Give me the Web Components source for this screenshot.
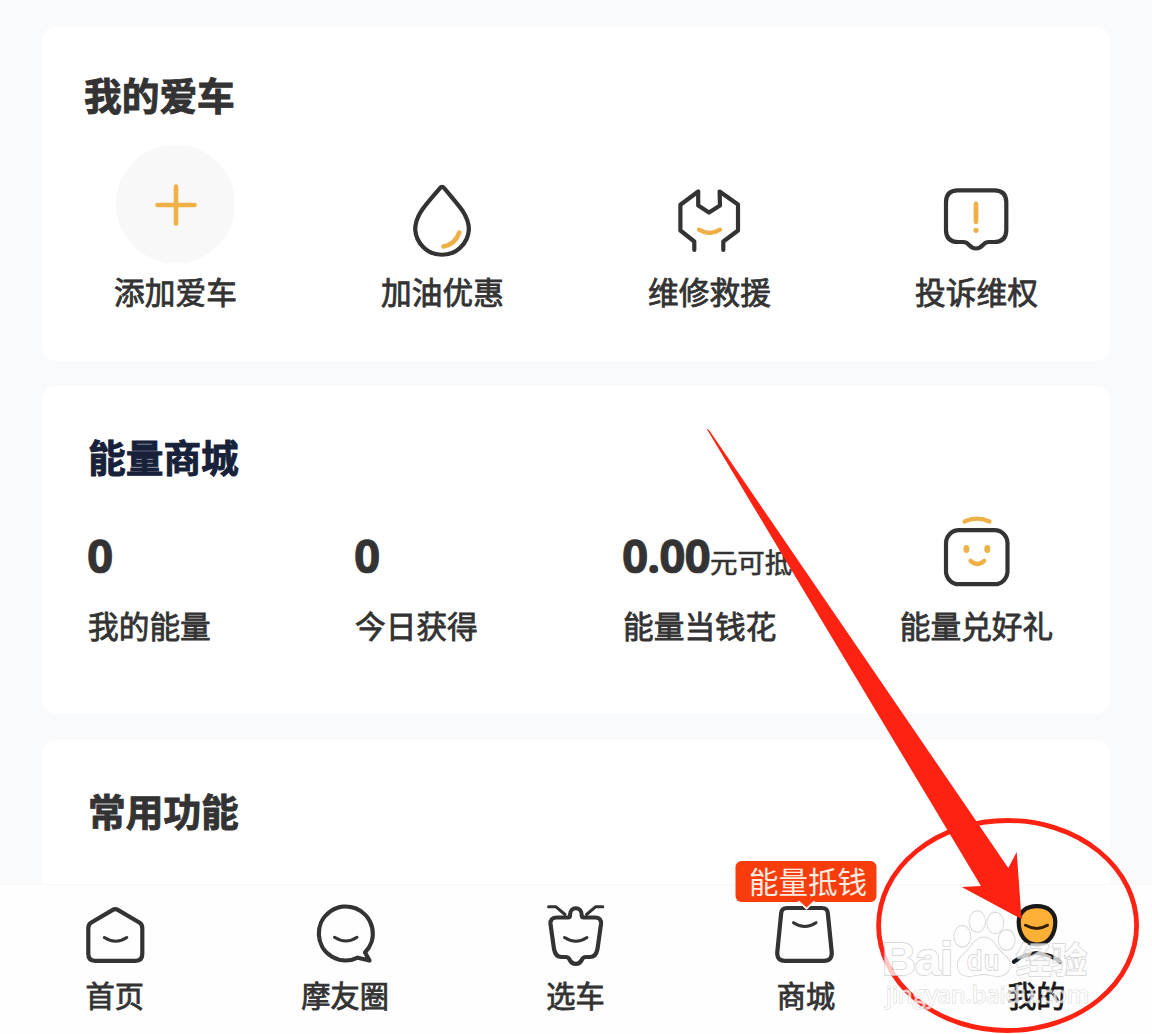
<!DOCTYPE html>
<html lang="zh-CN">
<head>
<meta charset="utf-8">
<title>我的</title>
<style>
html,body{margin:0;padding:0}
body{width:1152px;height:1034px;overflow:hidden;background:#f8fafc;font-family:"Noto Sans CJK SC",sans-serif;color:#333}
</style>
</head>
<body>
<mine-page></mine-page>
<script>
const define=(name,html)=>customElements.define(name,class extends HTMLElement{
  constructor(){super();const t=document.createElement('template');t.innerHTML=html;
    this.attachShadow({mode:'open'}).append(t.content.cloneNode(true));}
});

const K='fill="none" stroke="#333" stroke-width="4.2" stroke-linejoin="round" stroke-linecap="round"';
const O='fill="none" stroke="#f0b048" stroke-linecap="round"';
const ICONS={
  plus:['116 144 120 120',`<circle cx="175.500" cy="204" r="59.500" fill="#f8f8f8"/><path d="M157.5 205H194.500M176 186.500V223.500" ${O} stroke-width="4.600"/>`],
  drop:['383 144 120 120',`<path d="M439.8 188.300Q442 185.400 444.300 188.300C453 198.800 458 204.200 462.500 210.700C466.500 217 468.900 223 468.900 229.500A26.900 26.900 0 0 1 415.200 229.500C415.200 223 417.500 217 421.500 210.700C426 204.200 431 198.800 439.800 188.300Z" ${K}/><path d="M443.500 246.500Q455.500 244 459.300 232.500" ${O} stroke-width="4.600"/>`],
  wrench:['650 144 120 120',`<path d="M694.300 250V241.500L680.400 230.500V204.800L698.200 191.500V205.500L709 212.500L720 205.500L719.600 191.500L738 204.500V230.500L723.300 241.500V250" ${K}/><path d="M699 229.700Q709.500 236.200 720 229.700" ${O} stroke-width="4.400"/>`],
  alert:['917 144 120 120',`<path d="M958 190.300H994.300Q1006.300 190.300 1006.300 202.300V230Q1006.300 242 994.300 242H989Q985.500 242 983.500 244.500Q976 252.500 968.500 244.500Q966.500 242 963 242H958Q946 242 946 230V202.300Q946 190.300 958 190.300Z" ${K}/><path d="M976 204V221.800" ${O} stroke-width="4.800"/><circle cx="976" cy="230.300" r="2.600" fill="#f0b048"/>`],
  gift:['917 510 120 80',`<rect x="946" y="530.200" width="61.500" height="54" rx="13" ${K}/><path d="M964.500 521.500Q977 515.800 989.500 521.500M970.500 560.800Q977.300 567 984.200 560.800" ${O} stroke-width="4.300"/><ellipse cx="966.400" cy="549" rx="3" ry="4.100" fill="#f0b048"/><ellipse cx="987.300" cy="549" rx="3" ry="4.100" fill="#f0b048"/>`],
  home:['75.200 896 80 76',`<path d="M113 909.900Q115.500 908.500 118 909.900L139.500 922.500Q142.500 924.300 142.500 928V954Q142.500 960.800 135.500 960.800H95.500Q88.500 960.800 88.500 954V928Q88.500 924.300 91.500 922.500Z" ${K}/><path d="M104.500 937.500Q116 944.800 127 937.500" ${K} style="stroke-width:3"/>`],
  chat:['306 896 80 76',`<path d="M365 952.500A27 27 0 1 0 357.800 957.700L369.500 960.500Z" ${K}/><path d="M334.500 937.300Q346 944.700 357 937.300" ${K} style="stroke-width:3"/>`],
  moto:['536 896 80 76',`<path d="M557 917.500H568Q570 917.500 570 915C570 906 581.700 906 581.700 915Q581.700 917.500 583.700 917.500H595Q601.500 917.500 601 924L597.500 949Q596 957 590 957H586Q583 957 582 959.500Q580 963.800 575.800 963.800Q571.500 963.800 569.500 959.500Q568.500 957 565.500 957H561.500Q555.500 957 554 949L550.500 924Q550 917.500 557 917.500Z" ${K}/><path d="M548.500 906.800H556L565 914.500M602.800 906.800H595.500L586.500 914.500M564.500 937.500Q576 944.800 587 937.500" ${K} style="stroke-width:3"/>`],
  shop:['767 896 80 76',`<path d="M788 908H823Q828.200 908 828.800 913L832.700 952Q833.500 960.800 825 960.800H786Q777.500 960.800 778.300 952L782.200 913Q782.800 908 788 908Z" ${K}/><path d="M794.500 922.700Q806 930.200 817 922.700" ${K} style="stroke-width:3"/>`],
  me:['997 896 80 76',`<path d="M1037 906.200C1048 906.200 1055.300 912 1055.300 922C1055.300 934 1049 944.500 1037 944.500S1018.700 934 1018.700 922C1018.700 912 1026 906.200 1037 906.200Z" fill="#fdaf36" stroke="#191919" stroke-width="4.200"/><path d="M1014 961.800Q1024 954.500 1031 954.500Q1037 951.500 1043 954.500Q1050 954.500 1060 961.500" fill="none" stroke="#191919" stroke-width="4.200" stroke-linecap="round"/><path d="M1025.500 925.300Q1037 931.500 1047.500 925.300" fill="none" stroke="#30200a" stroke-width="3" stroke-linecap="round"/>`]
};

customElements.define('line-icon',class extends HTMLElement{
  constructor(){super();this.attachShadow({mode:'open'});}
  connectedCallback(){
    const [vb,art]=ICONS[this.getAttribute('name')];
    const [,,w,h]=vb.split(' ');
    this.shadowRoot.innerHTML=`<style>:host{display:block;flex:none}svg{display:block}</style><svg width="${w}" height="${h}" viewBox="${vb}" aria-hidden="true">${art}</svg>`;
  }
});

define('section-card',`<style>
:host{display:block;flex:none;box-sizing:border-box;width:1068px;border-radius:14px;background:#fff}
h2{margin:0;padding-left:var(--title-x,46px);font-size:37.7px;line-height:50px;font-weight:700;color:var(--title-color,#333);-webkit-text-stroke:.9px currentColor}
.row{display:grid;grid-template-columns:repeat(4,267px)}
</style><h2><slot name="title"></slot></h2><div class="row"><slot></slot></div>`);

define('quick-link',`<style>
:host{display:flex;flex-direction:column;align-items:center;gap:var(--gap,7px)}
.label{font-size:30.700px;line-height:40px;white-space:nowrap;-webkit-text-stroke:.8px #333}
</style><slot name="icon"></slot><div class="label"><slot></slot></div>`);

define('energy-stat',`<style>
:host{display:flex;flex-direction:column;box-sizing:border-box;padding-left:46px;gap:20px}
.value{display:flex;align-items:baseline;height:60px;line-height:60px;white-space:nowrap}
.num{font:700 46px/60px "Noto Sans",sans-serif;letter-spacing:-1px;margin-left:-1px;-webkit-text-stroke:.7px #333}
.unit{font-size:27.500px;-webkit-text-stroke:.6px #333}
.label{font-size:30.700px;line-height:40px;white-space:nowrap;-webkit-text-stroke:.8px #333}
</style><div class="value"><span class="num"><slot name="value"></slot></span><span class="unit"><slot name="unit"></slot></span></div><div class="label"><slot></slot></div>`);

define('tab-item',`<style>
:host{display:flex;flex-direction:column;align-items:center;flex:1 1 0;position:relative;padding-top:11px;gap:2px;color:#333}
.label{font-size:29.200px;line-height:40px;white-space:nowrap;-webkit-text-stroke:.8px currentColor;margin-right:1px}
::slotted([slot=badge]){position:absolute;top:-24px;left:50%;transform:translateX(-50%)}
</style><slot name="icon"></slot><div class="label"><slot></slot></div><slot name="badge"></slot>`);

define('promo-badge',`<style>
:host{display:block;width:141px;height:41px;border-radius:6px;background:#f93c0c;color:#ffece0;font-size:29.500px;line-height:38px;text-align:center;white-space:nowrap;box-shadow:0 0 0 1px #fff}
span{padding-left:3px}
svg{position:absolute;left:62px;top:40px}
</style><span><slot></slot></span><svg width="18" height="9"><path d="M0 0L9 9L18 0Z" fill="#fff"/><path d="M2 0H16L9 6.500Z" fill="#f93c0c"/></svg>`);

define('tab-bar',`<style>
:host{display:flex;box-sizing:border-box;height:149px;background:#fefefe;box-shadow:0 -1px 0 #f8f8f8}
</style><slot></slot>`);

define('site-watermark',`<style>
:host{position:absolute;inset:0;pointer-events:none}svg{display:block}
text,path,ellipse{fill:#fff;stroke:#ccc;stroke-width:1.800px;paint-order:stroke}
text{font-family:"Liberation Sans","Noto Sans CJK SC",sans-serif}
.mark{opacity:.75}.cjk{font-family:"Noto Sans CJK SC",sans-serif}
.url{font-family:"Open Sans",sans-serif;stroke-width:1.200px}
</style><svg width="1152" height="1034"><g class="mark">
<text x="882" y="975" font-size="47" font-weight="700" textLength="71">Bai</text>
<ellipse cx="962.300" cy="936.300" rx="8" ry="10.300"/><ellipse cx="977.300" cy="921.500" rx="7.800" ry="10.300"/><ellipse cx="995.300" cy="923" rx="8" ry="10.300"/><ellipse cx="1006.700" cy="940" rx="8" ry="10"/>
<path d="M984 937.500C994 937.500 997 950 1004 955C1014 962 1010 976 998 976C992 976 988 974 983 974C978 974 975 976 969 976C956 976 955 962 963 955C971 949 974 937.500 984 937.500Z"/>
<text x="967" y="970" font-size="27" textLength="32">du</text>
<text class="cjk" x="1016" y="973" font-size="35.500" font-weight="700">经验</text>
<text class="url" x="886" y="1003" font-size="24" textLength="203" lengthAdjust="spacingAndGlyphs">jingyan.baidu.com</text>
</g></svg>`);

define('pointer-marks',`<style>
:host{position:absolute;inset:0;pointer-events:none}svg{display:block}
</style><svg width="1152" height="1034"><ellipse cx="1007.600" cy="925.500" rx="129" ry="105" fill="none" stroke="#fe2213" stroke-width="4.800"/><path d="M706.500 428.500L709 430L1008.300 868L1016.700 852L1021.500 919L961.700 887L981 886Z" fill="#fe2213"/></svg>`);

define('mine-page',`<style>
:host{display:flex;flex-direction:column;position:relative;width:1152px;height:1034px;overflow:hidden}
main{display:flex;flex-direction:column;align-items:center;height:885px;flex:none;box-sizing:border-box;padding:27px 0 0;overflow:hidden}
.car{height:334px;padding-top:42px;--title-x:42px}
.car quick-link{margin-top:25px}
.energy{height:328px;margin-top:25px;padding-top:45px;--title-color:#17213a}
.energy energy-stat{margin-top:44px}
.energy quick-link{margin-top:29px;--gap:15px}
.common{height:160px;margin-top:26px;padding-top:45px}
.num3{margin-left:1px}
.active{color:#191919}
</style>
<main>
<section-card class="car"><span slot="title">我的爱车</span>
<quick-link><line-icon slot="icon" name="plus"></line-icon>添加爱车</quick-link>
<quick-link><line-icon slot="icon" name="drop"></line-icon>加油优惠</quick-link>
<quick-link><line-icon slot="icon" name="wrench"></line-icon>维修救援</quick-link>
<quick-link><line-icon slot="icon" name="alert"></line-icon>投诉维权</quick-link>
</section-card>
<section-card class="energy"><span slot="title">能量商城</span>
<energy-stat><span slot="value">0</span>我的能量</energy-stat>
<energy-stat><span slot="value">0</span>今日获得</energy-stat>
<energy-stat class="num3"><span slot="value">0.00</span><span slot="unit">元可抵</span>能量当钱花</energy-stat>
<quick-link><line-icon slot="icon" name="gift"></line-icon>能量兑好礼</quick-link>
</section-card>
<section-card class="common"><span slot="title">常用功能</span></section-card>
</main>
<tab-bar>
<tab-item><line-icon slot="icon" name="home"></line-icon>首页</tab-item>
<tab-item><line-icon slot="icon" name="chat"></line-icon>摩友圈</tab-item>
<tab-item><line-icon slot="icon" name="moto"></line-icon>选车</tab-item>
<tab-item><line-icon slot="icon" name="shop"></line-icon>商城<promo-badge slot="badge">能量抵钱</promo-badge></tab-item>
<tab-item class="active"><line-icon slot="icon" name="me"></line-icon>我的</tab-item>
</tab-bar>
<pointer-marks></pointer-marks>
<site-watermark></site-watermark>`);
</script>
</body>
</html>
